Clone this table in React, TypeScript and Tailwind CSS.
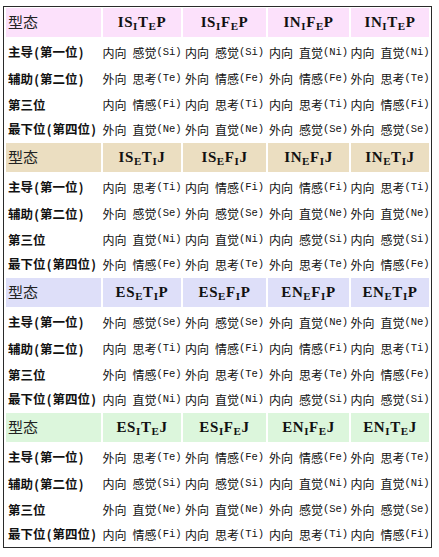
import React from 'react';

type Section = {
  bg: string;
  types: string[];
  rows: string[][];
};

const labels = ['主导(第一位)', '辅助(第二位)', '第三位', '最下位(第四位)'];

const sections: Section[] = [
  {
    bg: 'bg-[#fce1fb]',
    types: ['IS_IT_EP', 'IS_IF_EP', 'IN_IF_EP', 'IN_IT_EP'],
    rows: [
      ['内向 感觉(Si)', '内向 感觉(Si)', '内向 直觉(Ni)', '内向 直觉(Ni)'],
      ['外向 思考(Te)', '外向 情感(Fe)', '外向 情感(Fe)', '外向 思考(Te)'],
      ['内向 情感(Fi)', '内向 思考(Ti)', '内向 思考(Ti)', '内向 情感(Fi)'],
      ['外向 直觉(Ne)', '外向 直觉(Ne)', '外向 感觉(Se)', '外向 感觉(Se)'],
    ],
  },
  {
    bg: 'bg-[#ebdec1]',
    types: ['IS_ET_IJ', 'IS_EF_IJ', 'IN_EF_IJ', 'IN_ET_IJ'],
    rows: [
      ['内向 思考(Ti)', '内向 情感(Fi)', '内向 情感(Fi)', '内向 思考(Ti)'],
      ['外向 感觉(Se)', '外向 感觉(Se)', '外向 直觉(Ne)', '外向 直觉(Ne)'],
      ['内向 直觉(Ni)', '内向 直觉(Ni)', '内向 感觉(Si)', '内向 感觉(Si)'],
      ['外向 情感(Fe)', '外向 思考(Te)', '外向 思考(Te)', '外向 情感(Fe)'],
    ],
  },
  {
    bg: 'bg-[#dedff9]',
    types: ['ES_ET_IP', 'ES_EF_IP', 'EN_EF_IP', 'EN_ET_IP'],
    rows: [
      ['外向 感觉(Se)', '外向 感觉(Se)', '外向 直觉(Ne)', '外向 直觉(Ne)'],
      ['内向 思考(Ti)', '内向 情感(Fi)', '内向 情感(Fi)', '内向 思考(Ti)'],
      ['外向 情感(Fe)', '外向 思考(Te)', '外向 思考(Te)', '外向 情感(Fe)'],
      ['内向 直觉(Ni)', '内向 直觉(Ni)', '内向 感觉(Si)', '内向 感觉(Si)'],
    ],
  },
  {
    bg: 'bg-[#dcf6dc]',
    types: ['ES_IT_EJ', 'ES_IF_EJ', 'EN_IF_EJ', 'EN_IT_EJ'],
    rows: [
      ['外向 思考(Te)', '外向 情感(Fe)', '外向 情感(Fe)', '外向 思考(Te)'],
      ['内向 感觉(Si)', '内向 感觉(Si)', '内向 直觉(Ni)', '内向 直觉(Ni)'],
      ['外向 直觉(Ne)', '外向 直觉(Ne)', '外向 感觉(Se)', '外向 感觉(Se)'],
      ['内向 情感(Fi)', '内向 思考(Ti)', '内向 思考(Ti)', '内向 情感(Fi)'],
    ],
  },
];

const rowHeights = ['h-[27px]', 'h-[26px]', 'h-[26px]', 'h-[23px]'];

// "IS_IT_EP" -> I S [I] T [E] P, underscore marks a subscript letter
function TypeName({ code }: { code: string }) {
  const parts: React.ReactNode[] = [];
  for (let i = 0; i < code.length; i++) {
    if (code[i] === '_') {
      parts.push(
        <sub key={i} className="text-[11px] relative top-[3px] align-baseline">
          {code[i + 1]}
        </sub>
      );
      i++;
    } else {
      parts.push(<span key={i}>{code[i]}</span>);
    }
  }
  return (
    <span className="font-['Liberation_Serif',serif] font-bold text-[15px] tracking-[0.6px] text-[#111]">
      {parts}
    </span>
  );
}

// label like "最下位(第四位)": brackets get a half-width box as in the original
function Label({ text }: { text: string }) {
  const m = text.match(/^(.*?)\((.*)\)$/);
  if (!m) return <span>{text}</span>;
  return (
    <span className="inline-flex items-center whitespace-nowrap">
      <span>{m[1]}</span>
      <span className="w-[7px] text-center">(</span>
      <span>{m[2]}</span>
      <span className="w-[7px] text-center">)</span>
    </span>
  );
}

function Func({ text }: { text: string }) {
  const [dir, rest] = text.split(' ');
  const name = rest.slice(0, 2);
  const abbr = rest.slice(2);
  return (
    <span className="inline-flex items-center whitespace-nowrap text-[12px] text-[#111]">
      <span>{dir}</span>
      <span className="ml-[6px]">{name}</span>
      <span className="font-['Liberation_Mono',monospace] text-[10.5px]">{abbr}</span>
    </span>
  );
}

export default function App() {
  return (
    <div className="w-[439px] h-[557px] bg-white font-['Noto_Sans_CJK_SC',sans-serif] pt-[6px] pl-[3px]">
      <div className="w-[429px] border border-[#2a2a2a] pl-[2px] pr-[2px] pt-[1px] pb-[1px]">
        {sections.map((s, si) => (
          <div key={si} className={si < sections.length - 1 ? 'mb-[2px]' : ''}>
            <div className="grid grid-cols-[95px_78px_83px_81px_78px] gap-x-[2px]">
              <div className={`${s.bg} h-[29px] flex items-center pl-[2px] text-[15px] text-[#222]`}>
                型态
              </div>
              {s.types.map((t) => (
                <div key={t} className={`${s.bg} h-[29px] flex items-center justify-center`}>
                  <TypeName code={t} />
                </div>
              ))}
            </div>
            <div className="mt-[2px]">
              {s.rows.map((row, ri) => (
                <div
                  key={ri}
                  className={`grid grid-cols-[95px_78px_83px_81px_78px] gap-x-[2px] ${rowHeights[ri]}`}
                >
                  <div className="flex items-center pl-[2px] text-[12.5px] font-bold text-[#111]">
                    <Label text={labels[ri]} />
                  </div>
                  {row.map((c, ci) => (
                    <div key={ci} className="flex items-center justify-center">
                      <Func text={c} />
                    </div>
                  ))}
                </div>
              ))}
            </div>
          </div>
        ))}
      </div>
    </div>
  );
}
